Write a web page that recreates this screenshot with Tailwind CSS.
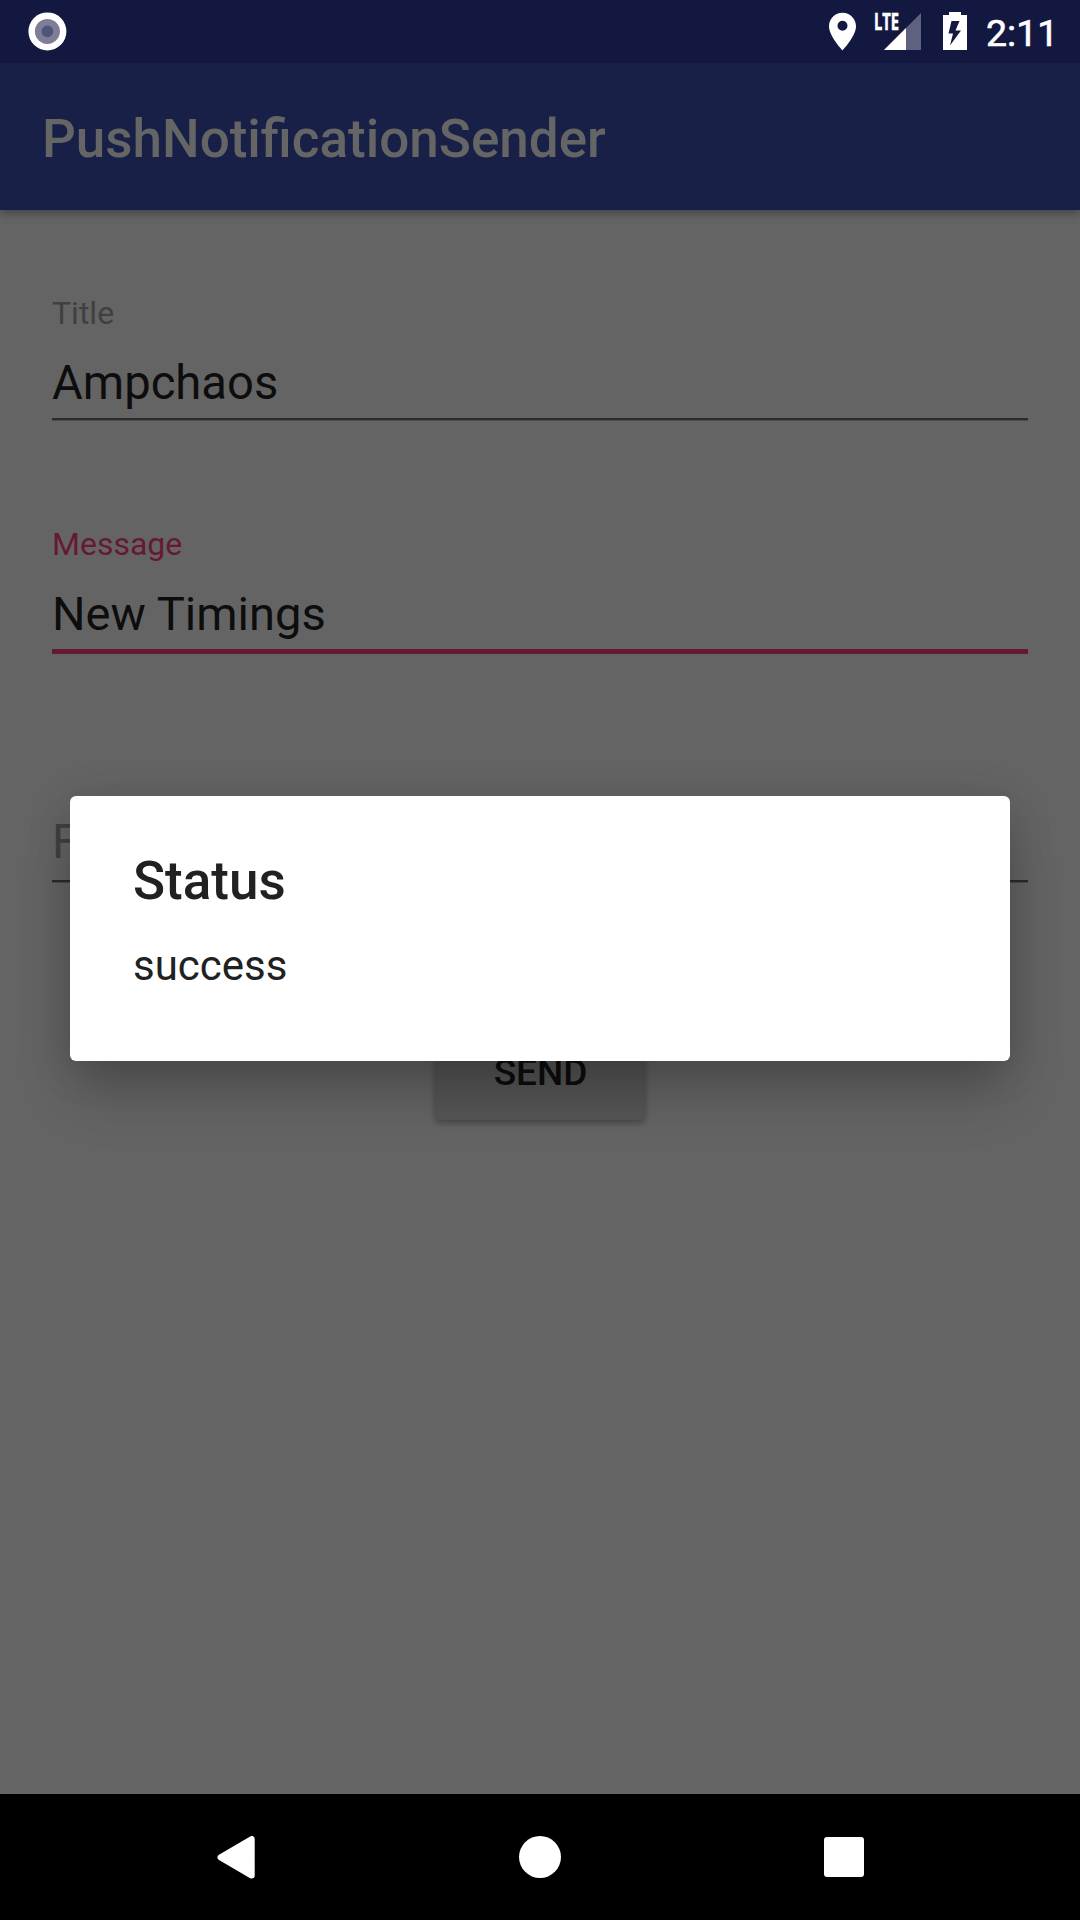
<!DOCTYPE html>
<html lang="en"><head><meta charset="utf-8"><title>PushNotificationSender</title>
<script src="https://cdn.jsdelivr.net/npm/@tailwindcss/browser@4"></script></head>
<body class="w-[1080px] h-[1920px] overflow-hidden relative flex flex-col bg-[#646464] font-[Roboto,sans-serif]">
<header class="relative z-10 shrink-0 shadow-[0_3px_9px_rgba(0,0,0,0.35)]">
<div class="h-[63px] bg-[#131840] flex items-center pl-[28px] pr-[27px] text-white">
<svg class="w-[39px] h-[63px]" viewBox="0 0 39 63"><circle cx="19.4" cy="31.4" r="19" fill="#fff"/><circle cx="19.4" cy="31.4" r="12.5" fill="#7b7e96"/><circle cx="19.4" cy="31.4" r="5.8" fill="#50547a"/></svg>
<svg class="ml-auto w-[27px] h-[63px]" viewBox="0 0 27 63"><path fill="#fff" fill-rule="evenodd" d="M13.5 12.7C6 12.7 0 18.700 0 26.200C0 36.300 13.500 50.300 13.500 50.300S27 36.300 27 26.200C27 18.700 21 12.700 13.500 12.700ZM13.500 20.700a5 5 0 1 1 0 10a5 5 0 1 1 0-10Z"/></svg>
<svg class="ml-[18px] w-[48px] h-[63px]" viewBox="0 0 48 63"><path fill="#5e6180" d="M47 13V50H10Z"/><path fill="#fff" d="M32 28V50H10Z"/><text x="0" y="29.800" font-family="Open Sans, sans-serif" font-weight="700" font-size="22.500" textLength="25" lengthAdjust="spacingAndGlyphs" fill="#fff" stroke="#fff" stroke-width="0.6">LTE</text></svg>
<svg class="ml-[21px] w-[24px] h-[63px]" viewBox="0 0 24 63"><path fill="#fff" fill-rule="evenodd" d="M6 12H18V15H24V50H0V15H6ZM8.500 21L5.500 33.500H10L7 45.500L18 30.500H12.500L16.500 21Z"/></svg>
<span class="ml-[19px] mt-[4px] w-[67px] text-[37.500px] leading-none whitespace-nowrap [-webkit-text-stroke:0.6px_white]">2:11</span>
</div>
<h1 class="h-[147px] bg-[#192047] flex items-center pl-[42px] pt-[7px] text-[53px] font-medium text-[#656565]">PushNotificationSender</h1>
</header>
<main class="flex-1 px-[52px] pt-[83px]">
<div class="h-[231px]"><div class="text-[32px] leading-[40px] text-[#404040]">Title</div><div class="mt-[20px] h-[65px] text-[47.200px] leading-[60px] text-[#0d0d0d]">Ampchaos</div><div class="h-[3px] bg-[#4b4b4b] border-t-2 border-[#2b2b2b]"></div></div>
<div class="h-[231px]"><div class="text-[32px] leading-[40px] text-[#661935]">Message</div><div class="mt-[20px] h-[65px] text-[47.100px] leading-[60px] text-[#0d0d0d]">New Timings</div><div class="h-[5px] bg-[#661935]"></div></div>
<div class="h-[174px] pt-[57px]"><div class="h-[68px] text-[47.200px] leading-[60px] text-[#404040]">F</div><div class="h-[3px] bg-[#4b4b4b] border-t-2 border-[#2b2b2b]"></div></div>
<div class="mx-auto w-[210px] h-[91px] pt-[22px] pl-px mt-[100px] rounded-[5px] bg-[#555] shadow-[0_3px_6px_rgba(0,0,0,0.3)] text-center text-[37px] leading-[44px] font-medium text-[#0d0d0d]">SEND</div>
</main>
<nav class="h-[126px] bg-black flex items-center justify-between pl-[216px] pr-[216px]">
<svg class="w-[40px] h-[44px]" viewBox="0 0 40 44"><path fill="#fff" stroke="#fff" stroke-width="6" stroke-linejoin="round" d="M4.500 22.300L35.700 4V40.600Z"/></svg>
<div class="w-[42px] h-[42px] rounded-full bg-white"></div>
<div class="w-[40px] h-[40px] rounded-[3px] bg-white"></div></nav>
<section class="absolute z-20 left-[70px] top-[796px] w-[940px] h-[265px] bg-white rounded-[6px] pl-[63px] pt-[50px] text-[#212121] shadow-[0_38px_54px_-6px_rgba(0,0,0,0.2),0_6px_44px_rgba(0,0,0,0.16)]"><h2 class="text-[53px] leading-[70px] font-medium">Status</h2><p class="text-[42px] leading-[56px] mt-[22px]">success</p></section>
</body></html>
